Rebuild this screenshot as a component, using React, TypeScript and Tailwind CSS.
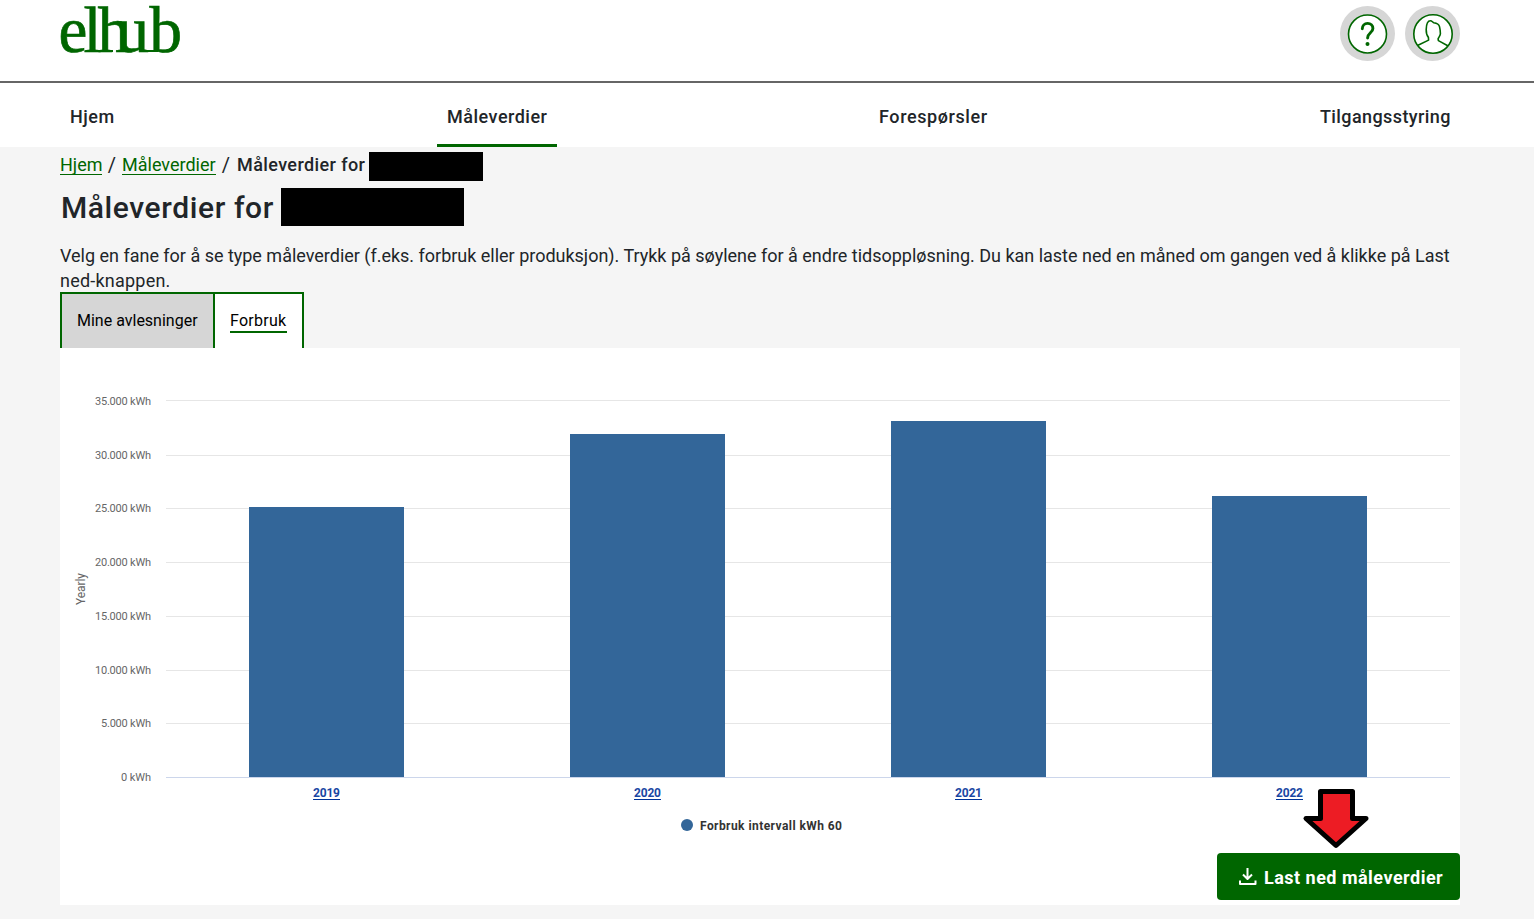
import React from "react";

const ticks = ["35.000 kWh", "30.000 kWh", "25.000 kWh", "20.000 kWh", "15.000 kWh", "10.000 kWh", "5.000 kWh", "0 kWh"];
const tickY = [53, 107, 160, 214, 268, 322, 375, 429];
const lineY = [52, 107, 160, 214, 268, 322, 375, 429];
const bars = [
  { year: "2019", x: 189, top: 159 },
  { year: "2020", x: 510, top: 86 },
  { year: "2021", x: 831, top: 73 },
  { year: "2022", x: 1152, top: 148 },
];

function Logo() {
  return (
    <svg className="block h-[80px] w-[160px] overflow-visible fill-[#006600] font-['Liberation_Serif',serif]" viewBox="0 0 160 80">
      <text x="-1.5 23.6 37.6 56.6 89.5" y="51.5" fontSize="65" stroke="#006600" strokeWidth="0.7">
        elhub
      </text>
      <rect x="26" y="50" width="27" height="2" />
      <rect x="80" y="50" width="18" height="2" />
    </svg>
  );
}

function HelpIcon() {
  return (
    <svg className="size-[55px]" viewBox="0 0 55 55" fill="none">
      <circle cx="27.5" cy="27.5" r="27.5" fill="#d6d6d6" />
      <circle cx="27.5" cy="28" r="19" fill="#fff" stroke="#006600" strokeWidth="1.6" />
      <path d="M22.3 22.8c0-3.2 2.2-5.4 5.300-5.400s5.300 2.100 5.300 5c0 4.400-5.300 4.400-5.300 9.600" stroke="#006600" strokeWidth="2.9" strokeLinecap="round" />
      <circle cx="27.5" cy="38" r="2" fill="#006600" />
    </svg>
  );
}

function ProfileIcon() {
  return (
    <svg className="size-[55px]" viewBox="0 0 55 55" fill="none">
      <circle cx="27.5" cy="27.5" r="27.5" fill="#d6d6d6" />
      <circle cx="28" cy="28" r="19.2" fill="#fff" stroke="#006600" strokeWidth="1.6" />
      <path
        d="M13 39.3l10.6-5.2-.2-2.7c-1.7-1.9-2.3-4.6-2.2-7.8.1-4.6 1-8.8 4.2-8.8 1.6 0 2 1.3 3.4 1.9 2.5.3 5 1.2 5.7 3.9.5 2 .9 5.2.9 7.2-.2 2.2-1.7 3.4-2.3 5l.3 1.8 9.8 5.4"
        stroke="#006600"
        strokeWidth="1.6"
        strokeLinejoin="round"
      />
    </svg>
  );
}

function Chart() {
  return (
    <svg className="block h-[500px] w-[1400px] font-[Roboto,sans-serif]" viewBox="0 0 1400 500">
      {ticks.map((label, i) => (
        <g key={label}>
          <rect x="106" y={lineY[i]} width="1284" height="1" fill={i === 7 ? "#ccd6eb" : "#e6e6e6"} />
          <text x="91" y={tickY[i] + 4} textAnchor="end" fontSize="11" fill="#666666" textLength={i === 7 ? 30 : i === 6 ? 50 : 56}>
            {label}
          </text>
        </g>
      ))}
      <text transform="translate(25 241) rotate(-90)" textAnchor="middle" fontSize="12" fill="#666666" textLength="32">
        Yearly
      </text>
      {bars.map((b) => (
        <g key={b.year}>
          <rect x={b.x} y={b.top} width="155" height={429 - b.top} fill="#336699" />
          <text x={b.x + 77.5} y="449" textAnchor="middle" fontSize="12" fontWeight="700" fill="#1a47a3" textLength="27">
            {b.year}
          </text>
          <rect x={b.x + 64} y="451" width="27" height="1" fill="#003399" />
        </g>
      ))}
      <circle cx="627" cy="477" r="6" fill="#336699" />
      <text x="640" y="482" fontSize="12" fontWeight="700" fill="#333333" textLength="142">
        Forbruk intervall kWh 60
      </text>
    </svg>
  );
}

function DownloadIcon() {
  return (
    <svg className="h-[18px] w-[18px]" viewBox="0 0 18 18" fill="none" stroke="#fff" strokeWidth="2">
      <path d="M8.5 0v11M4 6.500L8.500 11 13 6.500M1 12.500V16H16.500V12.500" strokeLinejoin="round" />
    </svg>
  );
}

export default function App() {
  return (
    <div className="h-[919px] w-[1534px] overflow-hidden bg-[#f5f5f5] font-[Roboto,sans-serif] text-[#212529]">
      <header className="flex h-[83px] items-start justify-between border-b-2 border-[#666666] bg-white pr-[74px] pl-[60px]">
        <Logo />
        <div className="flex gap-[10px] pt-[6px]">
          <HelpIcon />
          <ProfileIcon />
        </div>
      </header>
      <nav className="flex h-16 justify-between bg-white pr-[74px] pl-[60px] text-[18px] leading-[68px] font-medium tracking-[0.5px]">
        <a className="w-[65px] px-[10px] whitespace-nowrap">Hjem</a>
        <a className="w-[120px] border-b-3 border-[#006600] px-[10px] whitespace-nowrap">Måleverdier</a>
        <a className="w-[129px] px-[10px] tracking-[0.6px] whitespace-nowrap">Forespørsler</a>
        <a className="w-[150px] px-[10px] tracking-[0.4px] whitespace-nowrap">Tilgangsstyring</a>
      </nav>
      <main className="pr-[74px] pl-[60px]">
        <div className="flex h-[41px] items-start pt-[5px] text-[18px] leading-[26px] whitespace-nowrap">
          <div className="w-[42px] text-[#006600]">
            <span className="block h-[23px] border-b border-[#006600]">Hjem</span>
          </div>
          <span className="w-5 text-center text-[20px]">/</span>
          <div className="w-[94px] text-[#006600]">
            <span className="block h-[23px] border-b border-[#006600]">Måleverdier</span>
          </div>
          <span className="w-5 text-center text-[20px]">/</span>
          <span className="w-[133px] pl-px font-medium tracking-[0.4px]">Måleverdier for</span>
          <span className="h-[29px] w-[114px] bg-black" />
        </div>
        <div className="flex h-[55px] items-start">
          <h1 className="w-[221px] pl-px text-[30px] leading-[40px] font-medium tracking-[0.6px] whitespace-nowrap">Måleverdier for</h1>
          <span className="h-[38px] w-[183px] bg-black" />
        </div>
        <p className="h-[49px] text-[18px] leading-[25px] tracking-[-0.012px] whitespace-nowrap">
          Velg en fane for å se type måleverdier (f.eks. forbruk eller produksjon). Trykk på søylene for å endre tidsoppløsning. Du kan laste ned en måned om gangen ved å klikke på Last
          <br />
          <span className="tracking-[0.22px]">ned-knappen.</span>
        </p>
        <div className="flex h-14 w-[244px] border-x-2 border-t-2 border-[#006600] text-[16px] leading-[54px] whitespace-nowrap text-black">
          <div className="w-[151px] shrink-0 bg-[#d6d6d6] pl-[15px]">Mine avlesninger</div>
          <div className="flex w-[89px] shrink-0 items-start border-l-2 border-[#006600] bg-white pt-[15px] pl-[15px]">
            <span className="h-[24px] w-[57px] border-b-2 border-[#006600] leading-[24px] tracking-[0.25px]">Forbruk</span>
          </div>
        </div>
        <section className="relative flex h-[557px] flex-col items-end bg-white">
          <Chart />
          <button className="mt-[5px] flex h-[47px] w-[243px] items-center rounded-[4px] bg-[#006600] pl-[22px] text-[18px] font-bold tracking-[0.48px] whitespace-nowrap text-white">
            <DownloadIcon />
            <span className="pt-[2px] pl-[7px]">Last ned måleverdier</span>
          </button>
          <svg className="absolute top-[440px] left-[1242px] h-[62px] w-[68px]" viewBox="0 0 68 62">
            <path d="M18.5 3.5H50.5V30.5H64L34 57.5 4 30.5H18.5Z" fill="#ed1c24" stroke="#000" strokeWidth="5" strokeLinejoin="round" />
          </svg>
        </section>
      </main>
    </div>
  );
}
